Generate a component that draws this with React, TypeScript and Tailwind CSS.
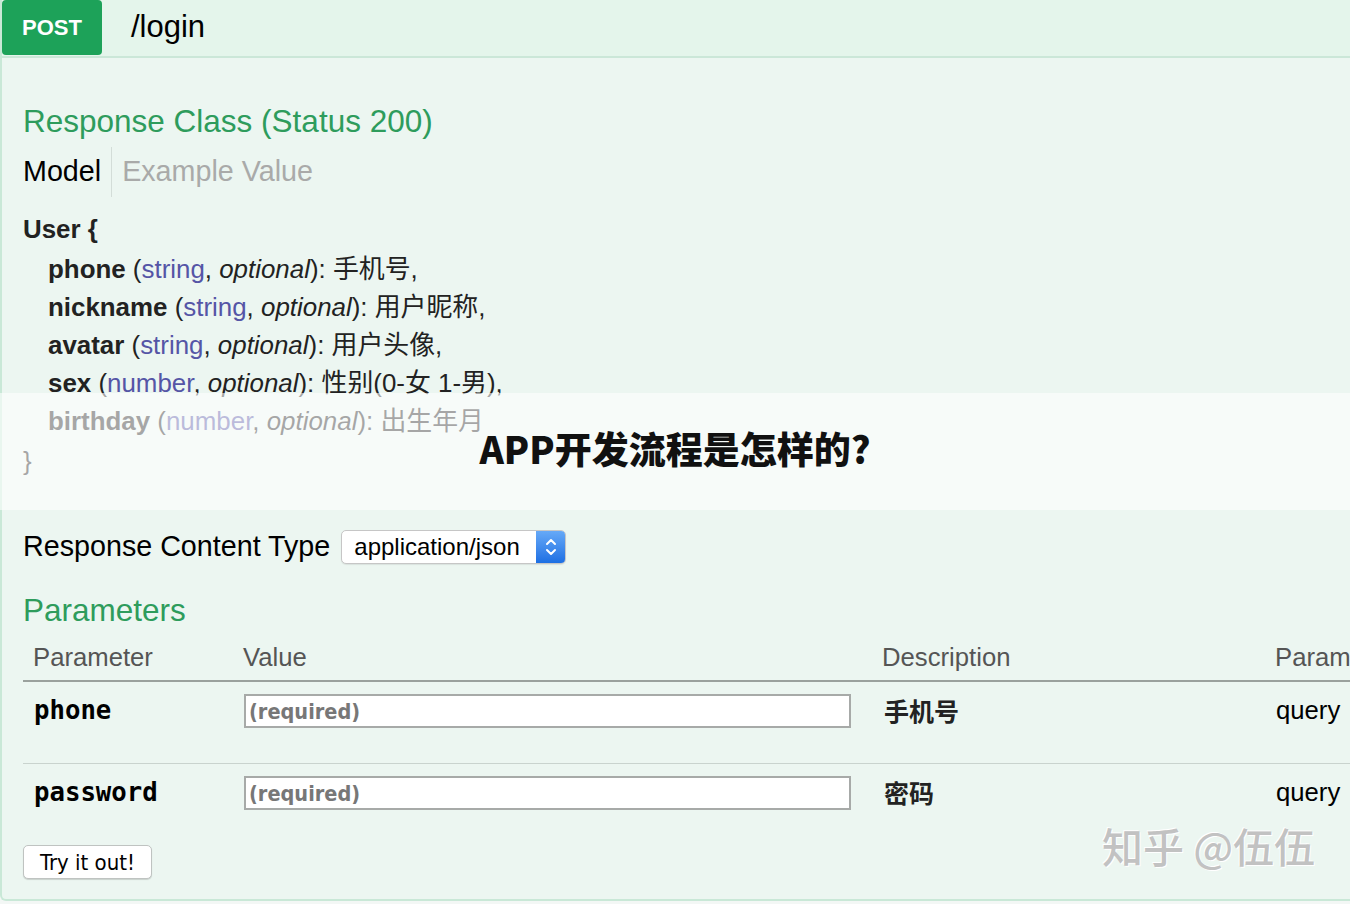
import React from 'react';

const sans = { fontFamily: '"Liberation Sans", Arial, "Noto Sans CJK SC", sans-serif' };

type Field = { name: string; type: string; desc: string };

const fields: Field[] = [
  { name: 'phone', type: 'string', desc: '手机号,' },
  { name: 'nickname', type: 'string', desc: '用户昵称,' },
  { name: 'avatar', type: 'string', desc: '用户头像,' },
  { name: 'sex', type: 'number', desc: '性别(0-女 1-男),' },
  { name: 'birthday', type: 'number', desc: '出生年月' },
];

const params = [
  { name: 'phone', desc: '手机号', type: 'query' },
  { name: 'password', desc: '密码', type: 'query' },
];

function SelectBox() {
  return (
    <div className="flex h-[34px] w-[225px] overflow-hidden rounded-[5px] border border-[#c6c6c6] bg-white shadow-[0_1px_1px_rgba(0,0,0,0.08)]">
      <div className="flex flex-1 items-center pl-[12px] text-[24px] text-black">application/json</div>
      <div className="flex w-[29px] items-center justify-center bg-gradient-to-b from-[#66a9f7] to-[#1c6fe3]">
        <svg width="14" height="22" viewBox="0 0 14 22" fill="none" stroke="white" strokeWidth="2" strokeLinecap="round" strokeLinejoin="round">
          <path d="M3 8l4-4 4 4" />
          <path d="M3 14l4 4 4-4" />
        </svg>
      </div>
    </div>
  );
}

export default function App() {
  return (
    <div className="relative h-[904px] w-[1350px] overflow-hidden bg-[#f3f7f5]" style={sans}>
      <div className="h-[901px] rounded-bl-[6px] border-b-2 border-l-2 border-[#c9e8d7] bg-[#ecf6f1]">
        {/* header */}
        <div className="flex h-[58px] items-start border-b-2 border-[#cbe7d8] bg-[#e4f5eb]">
          <div className="flex h-[55px] w-[100px] items-center justify-center rounded-[4px] bg-[#1da259] text-[22px] font-bold text-white">
            POST
          </div>
          <div className="ml-[29px] flex h-[55px] items-center text-[31px] text-black">/login</div>
        </div>

        <div className="pl-[21px]">
          <div className="mt-[42px] h-[42px] text-[31.5px] leading-[42px] text-[#2e9c5c]">Response Class (Status 200)</div>
          <div className="mt-[5px] flex h-[50px] items-center text-[28.7px]">
            <span className="text-black">Model</span>
            <span className="mx-[10px] h-[50px] w-px bg-[#d3ddd8]" />
            <span className="text-[#a9aaa9]">Example Value</span>
          </div>

          <div className="mt-[13px] text-[25.9px] leading-[38px] text-[#222]">
            <div className="mb-[2px] font-bold">User {'{'}</div>
            {fields.map((f) => (
              <div key={f.name} className="pl-[25px]">
                <span className="font-bold">{f.name}</span> (
                <span className="text-[#5555a6]">{f.type}</span>, <i>optional</i>): {f.desc}
              </div>
            ))}
            <div className="mt-[2px]">{'}'}</div>
          </div>

          <div className="mt-[48px] flex h-[38px] items-center gap-[11px]">
            <span className="text-[28.7px] text-black">Response Content Type</span>
            <SelectBox />
          </div>

          <div className="mt-[23px] h-[42px] text-[31.5px] leading-[42px] text-[#2e9c5c]">Parameters</div>

          <div className="mt-[4px]">
            <div className="grid h-[47px] grid-cols-[211px_638px_393px_200px] items-center border-b-2 border-[#9aa19d] text-[25.7px] text-[#555]">
              <div className="pl-[10px]">Parameter</div>
              <div className="pl-[9px]">Value</div>
              <div className="pl-[10px]">Description</div>
              <div className="pl-[10px]">Parameter Type</div>
            </div>
            {params.map((p, i) => (
              <div
                key={p.name}
                className={`grid h-[82px] grid-cols-[211px_638px_393px_200px] items-start pt-[12px] ${i === 0 ? 'border-b border-[#c9d3ce]' : ''}`}
              >
                <div
                  className="pl-[11px] text-[25.7px] font-bold leading-[33px] text-black"
                  style={{ fontFamily: '"DejaVu Sans Mono", "Liberation Mono", monospace' }}
                >
                  {p.name}
                </div>
                <div className="pl-[10px]">
                  <div
                    className="flex h-[34px] w-[607px] items-center border-2 border-[#a7aaa8] bg-white pl-[3px] pt-[3px] text-[21.5px] font-bold text-[#777]"
                    style={{ fontFamily: '"DejaVu Sans Condensed", "DejaVu Sans", sans-serif', fontStretch: 'condensed' }}
                  >
                    (required)
                  </div>
                </div>
                <div
                  className="pl-[12px] text-[25px] font-bold leading-[33px] text-[#222]"
                  style={{ fontFamily: '"Noto Sans CJK SC", sans-serif' }}
                >
                  {p.desc}
                </div>
                <div className="pl-[11px] text-[25.7px] leading-[33px] text-black">{p.type}</div>
              </div>
            ))}
          </div>

          <button
            className="-mt-[1px] flex h-[34px] w-[129px] items-center justify-center rounded-[5px] border border-[#bfc3c1] bg-white text-[22px] text-black shadow-[0_1px_1px_rgba(0,0,0,0.15)]"
            style={{ fontFamily: '"DejaVu Sans Condensed", "DejaVu Sans", sans-serif', fontStretch: 'condensed' }}
          >
            Try it out!
          </button>
        </div>
      </div>

      {/* title overlay band */}
      <div className="absolute left-0 top-[393px] flex h-[117px] w-full items-center justify-center bg-white/60 pb-[6px]">
        <span
          className="text-[37px] font-black leading-none text-[#111]"
          style={{ fontFamily: '"Noto Sans CJK SC", sans-serif' }}
        >
          APP开发流程是怎样的?
        </span>
      </div>

      {/* watermark */}
      <div
        className="absolute left-[1102px] top-[815px] text-[41px] font-medium text-[#c2c2c2] [text-shadow:1px_1px_0_#ffffff,-1px_-1px_0_#ffffff]"
        style={{ fontFamily: '"Noto Sans CJK SC", sans-serif' }}
      >
        知乎 @伍伍
      </div>
    </div>
  );
}
